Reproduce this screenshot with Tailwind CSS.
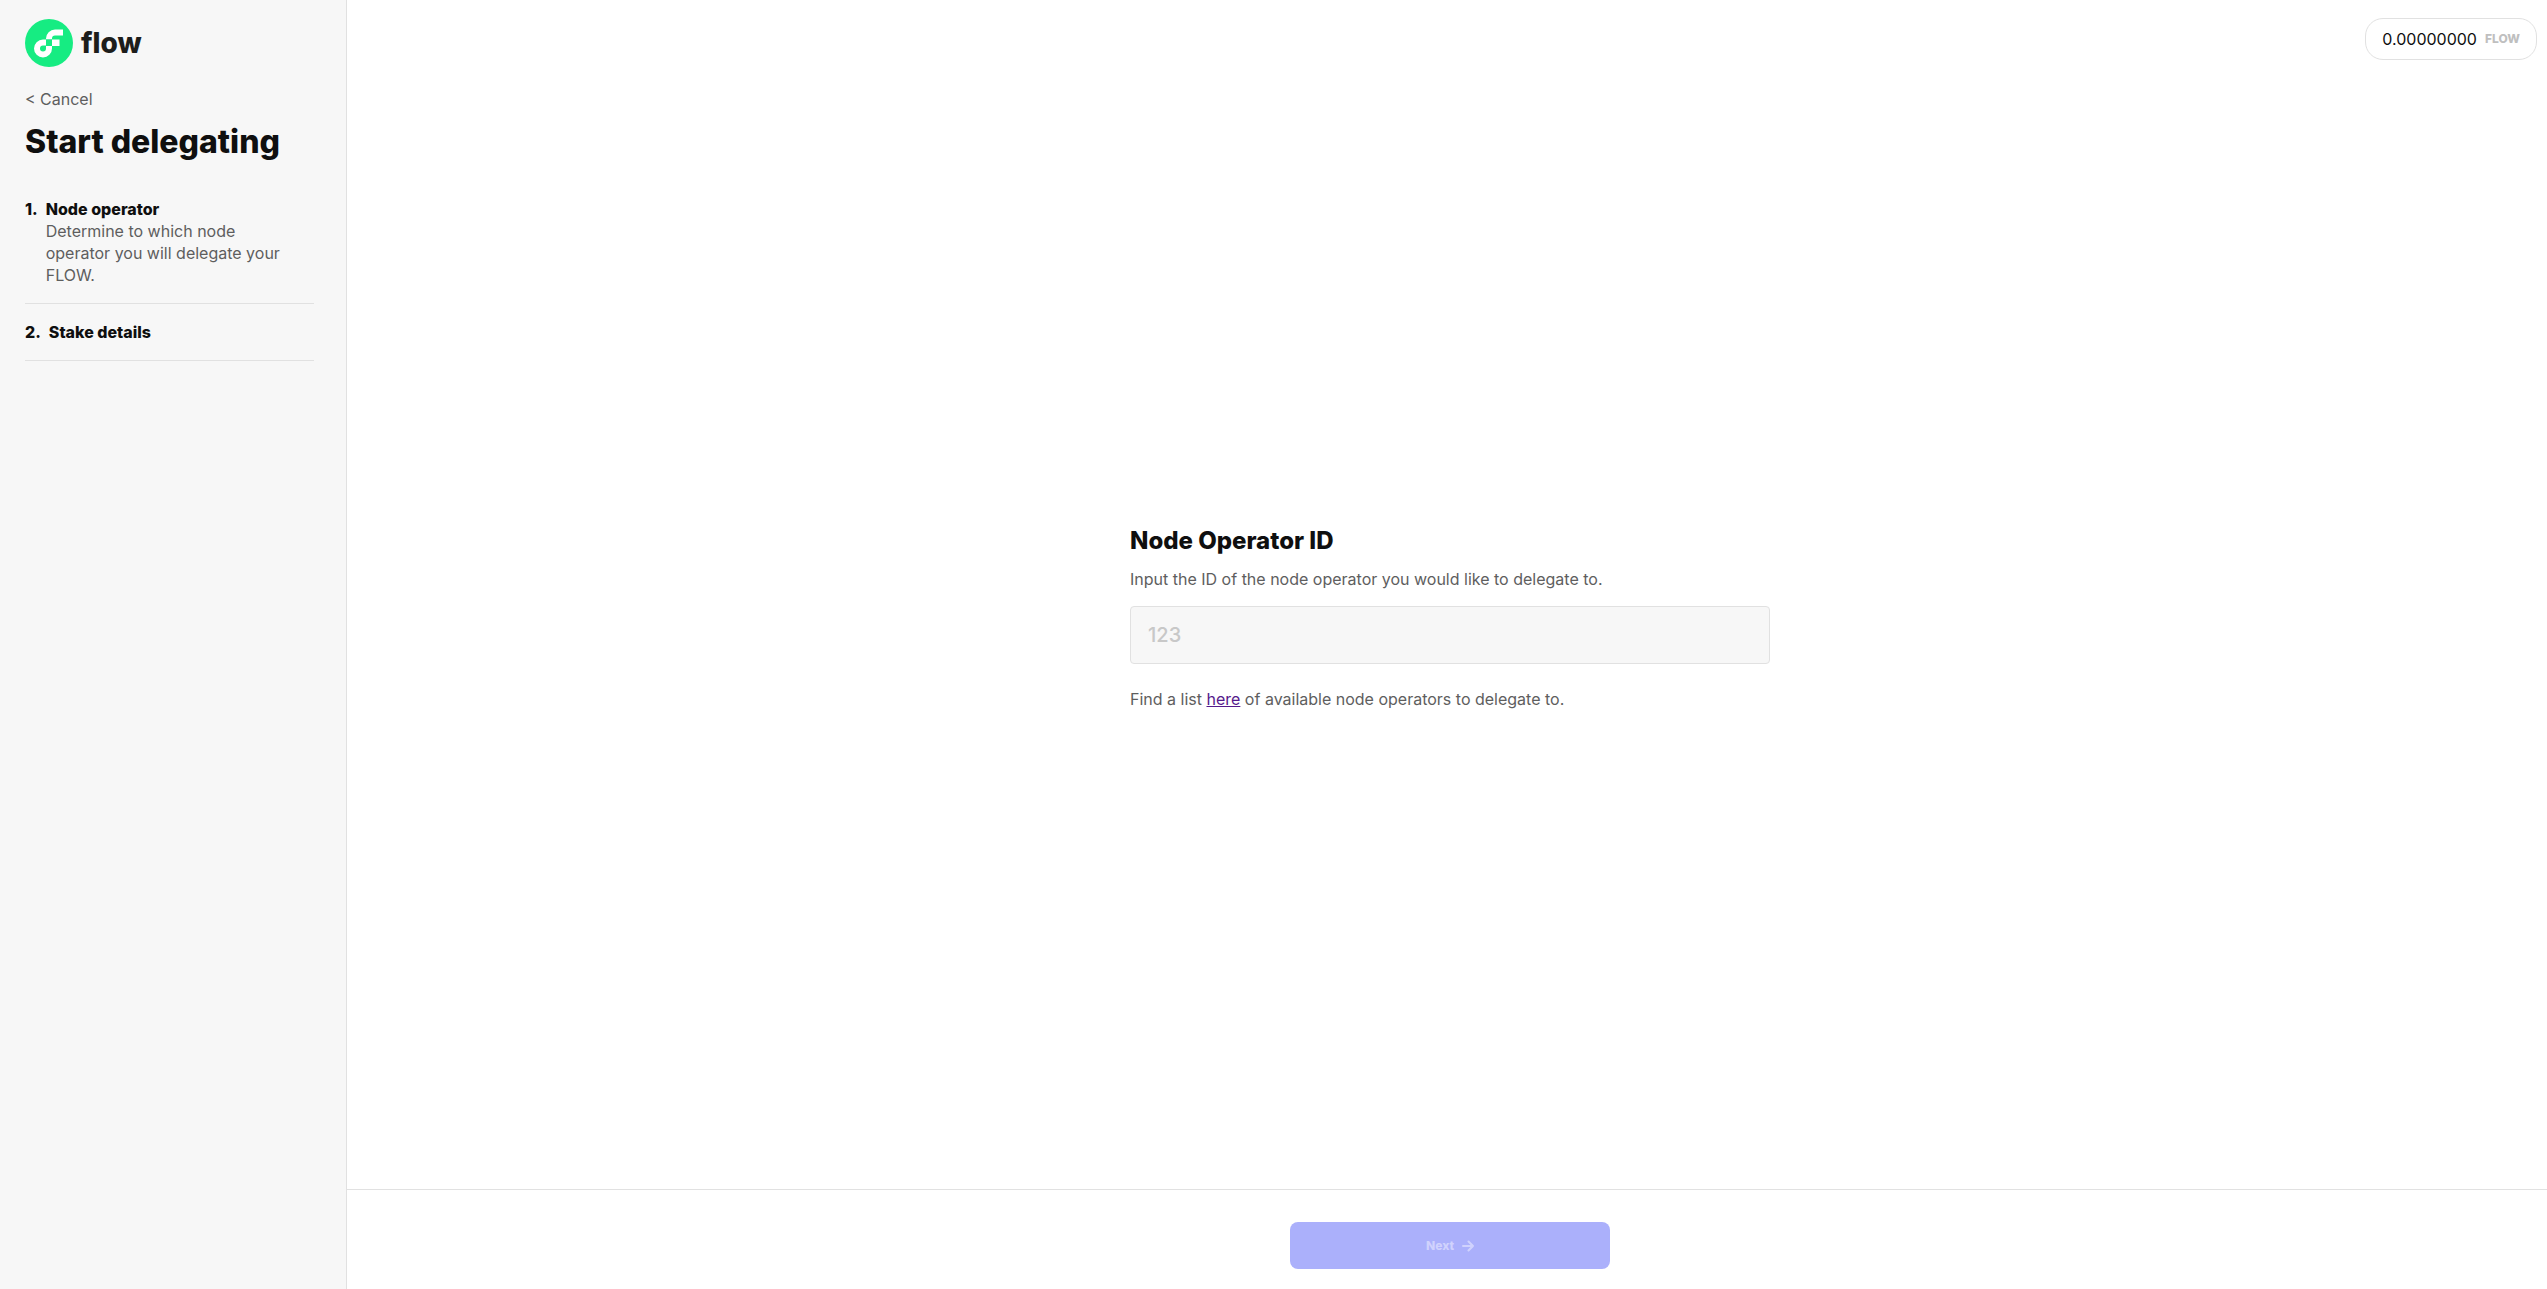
<!DOCTYPE html>
<html lang="en">
<head>
    <meta charset="UTF-8">
    <meta name="viewport" content="width=device-width, initial-scale=1.0">
    <title>Start delegating - Flow</title>

    <!-- Tailwind CSS -->
    <script src="https://cdn.jsdelivr.net/npm/@tailwindcss/browser@4"></script>
</head>
<body class="flex min-h-screen bg-white font-[Inter,sans-serif] text-base leading-[22px] text-[#5e5e5e]">

    <!-- Sidebar -->
    <aside class="w-[347px] shrink-0 border-r border-[#e1e1e1] bg-[#f7f7f7] pt-[19px] pr-8 pl-[25px]">
        <a href="#" class="flex items-center gap-2 text-[#1d1d1b]">
            <svg class="size-12" viewBox="0 0 48 48" aria-hidden="true">
                <circle cx="24" cy="24" r="24" fill="#16ec82" />
                <path fill="#fff" fill-rule="evenodd" d="M21 20.500H18a9 9 0 1 0 9 9V27h-6v2.500a3 3 0 1 1-3-3H21z" />
                <path fill="#fff" d="M27 27h7.500v-6.500H27zM21 20.500h6V19.500a3 3 0 0 1 3-3h8V10.500h-8a9 9 0 0 0-9 9z" />
                <path fill="#16ec82" d="M21 20.500h6V27h-6z" />
            </svg>
            <span class="text-[28px] leading-9 font-extrabold">flow</span>
        </a>

        <a href="#" class="mt-[21px] block">&lt; Cancel</a>
        <h1 class="mt-3 text-[32px] leading-10 font-extrabold text-[#0f0f0f]">Start delegating</h1>

        <ol class="mt-9">
            <li class="flex gap-2 border-b border-[#e1e1e1] pr-6 pb-[17px]">
                <span class="font-extrabold text-[#0f0f0f]">1.</span>
                <div>
                    <h2 class="font-extrabold text-[#0f0f0f]">Node operator</h2>
                    <p>Determine to which node operator you will delegate your FLOW.</p>
                </div>
            </li>
            <li class="flex gap-2 border-b border-[#e1e1e1] py-[17px]">
                <span class="font-extrabold text-[#0f0f0f]">2.</span>
                <h2 class="font-extrabold text-[#0f0f0f]">Stake details</h2>
            </li>
        </ol>
    </aside>

    <div class="flex min-w-0 grow flex-col">
        <!-- Balance -->
        <header class="flex justify-end pt-[18px] pr-[10px]">
            <div class="flex h-[42px] items-center gap-2 rounded-[18px] border border-[#e1e1e1] px-4">
                <span class="text-[#0f0f0f]">0.00000000</span>
                <span class="text-xs font-extrabold text-[#bfbfbf]">FLOW</span>
            </div>
        </header>

        <!-- Node operator form -->
        <main class="flex grow items-center justify-center pb-3 pl-[6px]">
            <form id="node-form" class="w-[640px]">
                <label for="node-id" class="block text-2xl leading-7 font-extrabold text-[#0f0f0f]">Node Operator ID</label>
                <p class="mt-[13px]">Input the ID of the node operator you would like to delegate to.</p>
                <input id="node-id" type="text" placeholder="123" class="mt-4 block h-[58px] w-full rounded border border-[#e1e1e1] bg-[#f7f7f7] px-[17px] text-xl font-medium text-[#0f0f0f] placeholder:text-[#c8c8c8]">
                <p class="mt-6">Find a list <a href="#" class="text-[#551a8b] underline">here</a> of available node operators to delegate to.</p>
            </form>
        </main>

        <!-- Footer -->
        <footer class="flex justify-center border-t border-[#e1e1e1] pt-8 pb-5 pl-[6px]">
            <button type="submit" form="node-form" disabled class="flex h-[47px] w-80 items-center justify-center gap-2 rounded-lg bg-[#abb0fb] text-xs font-extrabold text-[#d0d2fd]">
                Next
                <svg class="size-3" viewBox="0 0 12 12" fill="none" stroke="currentColor" stroke-width="2" stroke-linecap="round" stroke-linejoin="round" aria-hidden="true">
                    <path d="M1 6h10M6.500 1.500L11 6l-4.500 4.500" />
                </svg>
            </button>
        </footer>
    </div>

</body>
</html>
